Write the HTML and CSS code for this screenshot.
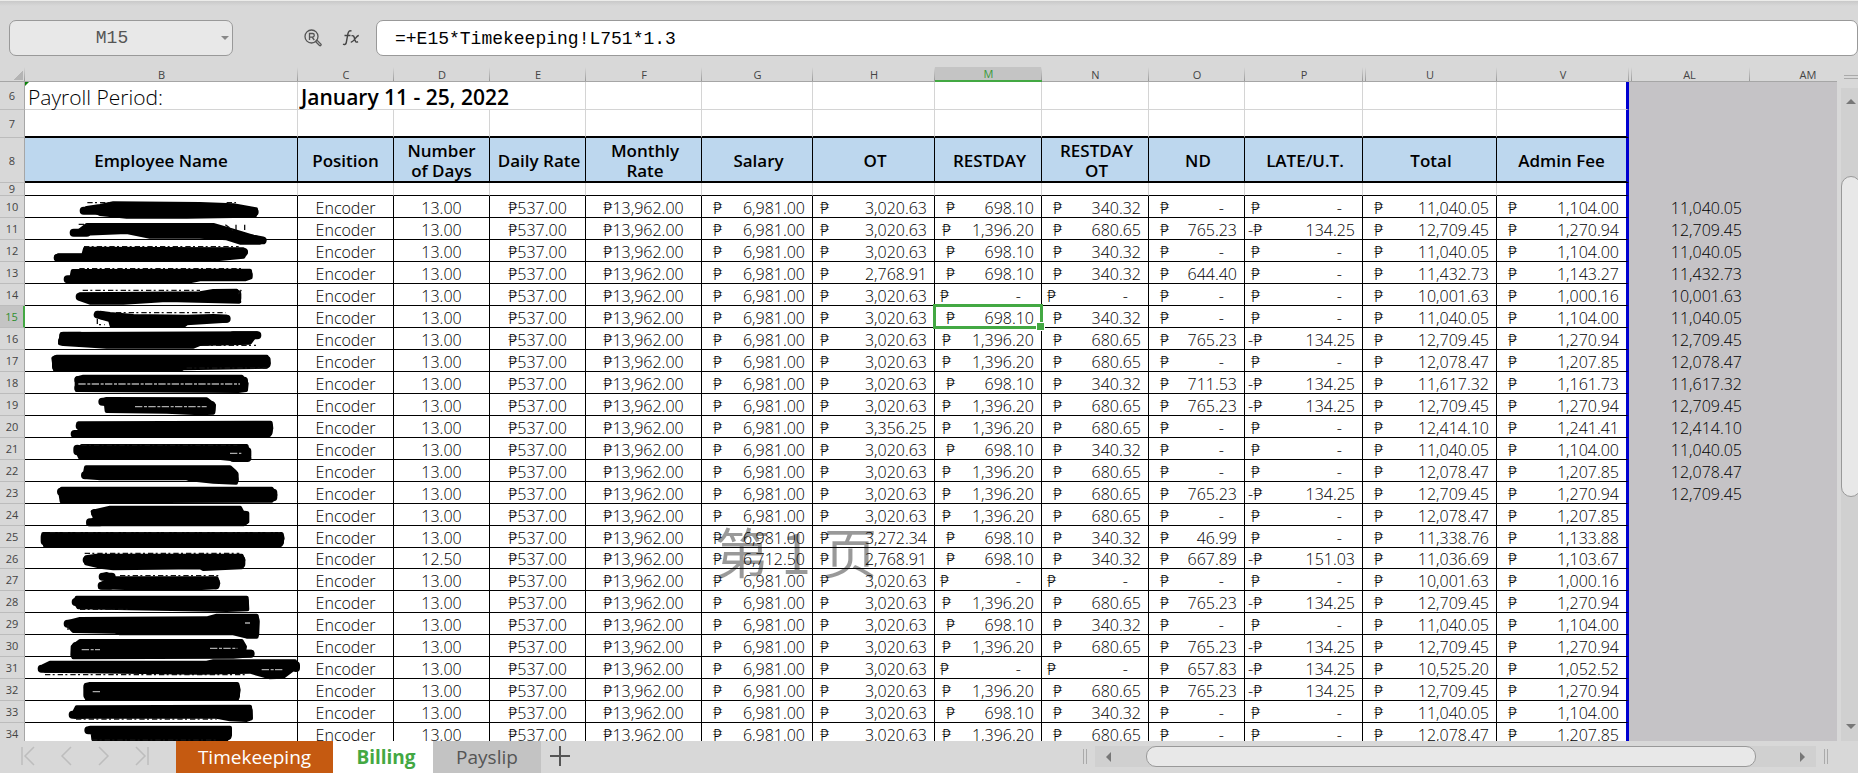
FILE: index.html
```html
<!DOCTYPE html>
<html lang="en">
<head>
    <meta charset="UTF-8">
    <meta name="viewport" content="width=device-width, initial-scale=1.0">
    <title>Billing</title>
    <link rel="stylesheet" href="styles.css">
</head>
<body>

    <div class="formula-bar">
        <div class="name-box">
            <input type="text" class="name-input" value="M15" aria-label="Name box">
            <span class="caret-down"></span>
        </div>
        <div class="formula-tools">
            <button class="tool" aria-label="Find reference">
                <svg width="18" height="18" viewBox="0 0 18 18" fill="none" stroke="#555" stroke-width="1.3">
                    <circle cx="7.5" cy="7.5" r="6.5"/>
                    <path d="M5.5 11V4.5h3a1.8 1.8 0 0 1 0 3.6h-3M8 8l2.3 3"/>
                    <path d="M11.5 12.5l1.4-1.4 4 4a1 1 0 0 1-1.4 1.4z"/>
                </svg>
            </button>
            <button class="tool" aria-label="Insert function">
                <svg width="18" height="18" viewBox="0 0 18 18" fill="none" stroke="#444" stroke-width="1.4">
                    <path d="M9.500 2.200C7.500 1 6.300 2.500 5.900 5L4.300 13.500C4 15.300 2.600 16 1 15.200M2.500 6.500h6M9.500 6.800c2.200-.8 2.700 1 3.200 3.200s1.300 4 3.300 2.700M16.800 6.500c-2.600 0-4.800 6.500-8 6.700"/>
                </svg>
            </button>
        </div>
        <input type="text" class="formula-input" value="=+E15*Timekeeping!L751*1.3" aria-label="Formula">
    </div>

    <div class="workspace">
        <div class="sheet">
            <table class="grid">
                <colgroup>
                    <col class="w-num"><col class="w-name"><col class="w-s"><col class="w-s"><col class="w-s">
                    <col class="w-f"><col class="w-g"><col class="w-h"><col class="w-m"><col class="w-m">
                    <col class="w-s"><col class="w-p"><col class="w-u"><col class="w-v"><col class="w-al"><col class="w-am">
                </colgroup>
                <thead>
                    <tr class="letters">
                        <th class="corner"></th>
                        <th>B</th><th>C</th><th>D</th><th>E</th><th>F</th><th>G</th><th>H</th>
                        <th class="active">M</th><th>N</th><th>O</th><th>P</th>
                        <th class="after-hidden">U</th><th>V</th><th class="after-hidden">AL</th><th>AM</th>
                    </tr>
                </thead>
                <tbody id="rows">
                    <tr class="plain tall">
                        <th class="num">6</th>
                        <td class="period flagged">Payroll Period:</td>
                        <td class="period bold" colspan="3">January 11 - 25, 2022</td>
                        <td></td><td></td><td></td><td></td><td></td><td></td><td></td><td></td><td class="edge"></td>
                        <td class="out"></td><td class="out"></td>
                    </tr>
                    <tr class="plain tall before-head">
                        <th class="num">7</th>
                        <td></td><td></td><td></td><td></td><td></td><td></td><td></td><td></td><td></td><td></td><td></td><td></td><td class="edge"></td>
                        <td class="out"></td><td class="out"></td>
                    </tr>
                    <tr class="head">
                        <th class="num">8</th>
                        <td>Employee Name</td><td>Position</td><td>Number<br>of Days</td>
                        <td class="shift">Daily Rate</td><td class="shift">Monthly<br>Rate</td><td class="shift">Salary</td>
                        <td class="shift">OT</td><td class="shift">RESTDAY</td><td class="shift">RESTDAY<br>OT</td>
                        <td class="shift">ND</td><td class="shift">LATE/U.T.</td><td class="shift">Total</td>
                        <td class="edge">Admin Fee</td>
                        <td class="out"></td><td class="out"></td>
                    </tr>
                    <tr class="plain short">
                        <th class="num">9</th>
                        <td></td><td></td><td></td><td></td><td></td><td></td><td></td><td></td><td></td><td></td><td></td><td></td><td class="edge"></td>
                        <td class="out"></td><td class="out"></td>
                    </tr>
                </tbody>
            </table>

            <!-- marker strokes over the name column -->
            <svg class="marker" width="420" height="570" viewBox="0 0 1260 1710">
                <g class="ink">
                    <path d="M260 54L300 48 340 40 600 42 700 46 768 58 765 76 700 78 560 80 380 80 300 72z"/>
                    <path d="M235 125L260 105 640 105 700 122 780 146 780 158 720 158 680 145 600 140 450 140 380 126 235 132z"/>
                    <path d="M175 196L250 195 255 176 730 178 738 186 730 200 650 208 175 210z"/>
                    <path d="M215 260L218 243 750 242 752 262 735 268 600 268 570 274 210 274z"/>
                    <path d="M240 313L600 310 640 303 710 302 718 335 500 330 370 338 270 338 240 327z"/>
                    <path d="M300 368L330 372 400 378 560 380 640 378 680 380 680 392 560 400 550 408 335 408 330 390 300 382z"/>
                    <path d="M180 460L185 432 770 430 750 458 600 462 580 470 320 470 190 462z"/>
                    <path d="M160 505L170 500 800 500 806 520 800 530 550 535 540 540 165 540z"/>
                    <path d="M230 565L250 560 725 560 740 580 738 600 715 603 230 600z"/>
                    <path d="M305 632L320 627 620 628 642 645 640 668 600 670 500 665 320 663 318 645z"/>
                    <path d="M225 736L240 720 235 700 812 698 814 715 808 735 780 738z"/>
                    <path d="M230 780L245 768 740 768 745 795 748 805 700 808 640 802 240 802z"/>
                    <path d="M253 860L258 832 690 832 705 845 710 870 708 878 640 875 570 868 560 865 300 865z"/>
                </g>
                <g class="ends">
                    <path d="M251 62L300 62M764 66H700M221 128H260M788 151L740 143M173 203H260M732 186H700M203 268H260M746 254H700M239 320H290M712 325V312M293 374L340 382M680 386H640M190 437H240M772 436H700M186 454H240M168 508V530M800 510V522M235 570H260M235 594H260M732 572V594M307 635H340M634 645V660M239 708H300M224 732H270M806 708V726M232 776V784M742 784V798M742 804H700M255 856H290M704 854V868"/>
                </g>
                <g class="ink" transform="translate(0 840)">
                    <path d="M180 62L185 56 815 56 826 75 815 92 185 94z"/>
                    <path d="M267 160L285 145 278 125 330 113 720 113 728 128 742 130 742 155 730 163 265 163z"/>
                    <path d="M130 192L845 192 848 205 842 225 135 227z"/>
                    <path d="M258 262L290 257 725 257 730 270 725 292 610 297 600 292 340 295 300 290 258 280z"/>
                    <path d="M305 316L320 312 345 325 650 325 655 340 650 352 590 355 400 355 300 352 304 342 325 330z"/>
                    <path d="M225 395L230 383 740 383 742 418 680 420 390 415 235 412z"/>
                    <path d="M205 456L240 447 620 445 650 437 770 437 773 455 770 500 740 500 700 490 360 490 345 485 220 483 205 466z"/>
                    <path d="M217 555L218 530 240 513 725 513 735 530 732 545 755 545 755 556 700 560 220 562z"/>
                    <path d="M130 588L150 578 620 578 640 574 885 574 890 590 850 620 810 622 750 605 600 608 135 602z"/>
                    <path d="M257 645L270 642 712 642 716 660 712 685 260 685z"/>
                    <path d="M222 728L230 712 750 710 753 745 740 750 690 748 650 740 225 740z"/>
                    <path d="M264 780L270 773 690 773 690 795 680 808 280 808 278 790z"/>
                </g>
                <g class="ends" transform="translate(0 840)">
                    <path d="M183 65H230M820 68V82M285 129H330M270 157H300M734 134V152M134 200V214M840 202V216M260 270H300M724 270V282M308 320H335M305 347H330M647 336V346M227 396H260M734 394V410M203 461H240M766 450V490M228 528V548M752 551H700M125 596H170M888 586V594M262 652V676M708 654V676M218 734H250M746 722V738M265 781H300M683 784V798"/>
                </g>
                <g class="specks">
                    <path d="M262 38H340M680 38H708M236 103H262M676 104L700 122M708 104V122M734 104V122M252 170H716M238 236H732M248 301H600M715 312L724 300M348 368H676M292 386V404H314M610 466H768M560 534H800M244 766H712"/>
                    <path d="M150 1028H840M254 1090H718M360 1157H655M204 1304V1325M240 1258H384M135 1454H740M228 1587H650M276 1650H656"/>
                </g>
                <g class="gaps">
                    <path d="M235 582H720M405 650H620M690 790H724M245 1379H300M630 1375H712M785 1439H852M278 1505H300M735 1299H750"/>
                </g>
            </svg>
            <div class="watermark">第 1 页</div>
        </div>

        <div class="vscroll">
            <span class="split-h"></span>
            <div class="vtrack">
                <span class="arrow up"></span>
                <span class="vthumb"></span>
                <span class="arrow down"></span>
            </div>
        </div>
    </div>

    <div class="tab-bar">
        <div class="tab-nav">
            <button aria-label="First sheet"><svg width="16" height="20" viewBox="0 0 16 20"><path d="M2 1v18M14 1L5 10l9 9"/></svg></button>
            <button aria-label="Previous sheet"><svg width="16" height="20" viewBox="0 0 16 20"><path d="M13 1L4 10l9 9"/></svg></button>
            <button aria-label="Next sheet"><svg width="16" height="20" viewBox="0 0 16 20"><path d="M3 1l9 9-9 9"/></svg></button>
            <button aria-label="Last sheet"><svg width="16" height="20" viewBox="0 0 16 20"><path d="M14 1v18M2 1l9 9-9 9"/></svg></button>
        </div>
        <button class="tab tab-orange">Timekeeping</button>
        <button class="tab tab-active">Billing</button>
        <button class="tab tab-grey">Payslip</button>
        <button class="add" aria-label="Add sheet"><svg width="20" height="20" viewBox="0 0 20 20"><path d="M10 0v20M0 10h20"/></svg></button>
        <div class="hscroll">
            <span class="split-v"></span>
            <div class="htrack">
                <span class="arrow left"></span>
                <span class="hthumb"></span>
                <span class="arrow right"></span>
            </div>
            <span class="split-v"></span>
        </div>
    </div>

    <script>
        // days, salary, OT, restday, restday OT, ND, late/U.T., total, admin fee
        const data = [
            ["13.00", "6,981.00", "3,020.63", "698.10", "340.32", "-", "-", "11,040.05", "1,104.00"],
            ["13.00", "6,981.00", "3,020.63", "1,396.20", "680.65", "765.23", "134.25", "12,709.45", "1,270.94"],
            ["13.00", "6,981.00", "3,020.63", "698.10", "340.32", "-", "-", "11,040.05", "1,104.00"],
            ["13.00", "6,981.00", "2,768.91", "698.10", "340.32", "644.40", "-", "11,432.73", "1,143.27"],
            ["13.00", "6,981.00", "3,020.63", "-", "-", "-", "-", "10,001.63", "1,000.16"],
            ["13.00", "6,981.00", "3,020.63", "698.10", "340.32", "-", "-", "11,040.05", "1,104.00"],
            ["13.00", "6,981.00", "3,020.63", "1,396.20", "680.65", "765.23", "134.25", "12,709.45", "1,270.94"],
            ["13.00", "6,981.00", "3,020.63", "1,396.20", "680.65", "-", "-", "12,078.47", "1,207.85"],
            ["13.00", "6,981.00", "3,020.63", "698.10", "340.32", "711.53", "134.25", "11,617.32", "1,161.73"],
            ["13.00", "6,981.00", "3,020.63", "1,396.20", "680.65", "765.23", "134.25", "12,709.45", "1,270.94"],
            ["13.00", "6,981.00", "3,356.25", "1,396.20", "680.65", "-", "-", "12,414.10", "1,241.41"],
            ["13.00", "6,981.00", "3,020.63", "698.10", "340.32", "-", "-", "11,040.05", "1,104.00"],
            ["13.00", "6,981.00", "3,020.63", "1,396.20", "680.65", "-", "-", "12,078.47", "1,207.85"],
            ["13.00", "6,981.00", "3,020.63", "1,396.20", "680.65", "765.23", "134.25", "12,709.45", "1,270.94"],
            ["13.00", "6,981.00", "3,020.63", "1,396.20", "680.65", "-", "-", "12,078.47", "1,207.85"],
            ["13.00", "6,981.00", "3,272.34", "698.10", "340.32", "46.99", "-", "11,338.76", "1,133.88"],
            ["12.50", "6,712.50", "2,768.91", "698.10", "340.32", "667.89", "151.03", "11,036.69", "1,103.67"],
            ["13.00", "6,981.00", "3,020.63", "-", "-", "-", "-", "10,001.63", "1,000.16"],
            ["13.00", "6,981.00", "3,020.63", "1,396.20", "680.65", "765.23", "134.25", "12,709.45", "1,270.94"],
            ["13.00", "6,981.00", "3,020.63", "698.10", "340.32", "-", "-", "11,040.05", "1,104.00"],
            ["13.00", "6,981.00", "3,020.63", "1,396.20", "680.65", "765.23", "134.25", "12,709.45", "1,270.94"],
            ["13.00", "6,981.00", "3,020.63", "-", "-", "657.83", "134.25", "10,525.20", "1,052.52"],
            ["13.00", "6,981.00", "3,020.63", "1,396.20", "680.65", "765.23", "134.25", "12,709.45", "1,270.94"],
            ["13.00", "6,981.00", "3,020.63", "698.10", "340.32", "-", "-", "11,040.05", "1,104.00"],
            ["13.00", "6,981.00", "3,020.63", "1,396.20", "680.65", "-", "-", "12,078.47", "1,207.85"]
        ];
        const names = ["g", "h", "m", "n", "o", "p", "u", "v"];
        const body = document.getElementById("rows");

        function moneyCell(value, name, rowNo) {
            let cls = "money col-" + name;
            if (value === "-") cls += " zero";
            if (value.length > 7) cls += " long";
            if (name === "p" && value !== "-") cls += " negative";
            if (name === "v") cls += " edge";
            if (name === "m" && rowNo === 15) cls += " selected";
            const sign = name === "p" && value !== "-" ? "-₱" : "₱";
            return `<td class="${cls}"><div><span>${sign}</span><span>${value}</span></div></td>`;
        }

        data.forEach((item, index) => {
            const rowNo = index + 10;
            const row = document.createElement("tr");
            row.className = "data" + (rowNo === 26 ? " lower" : "");
            let html = `<th class="num${rowNo === 15 ? " active" : ""}">${rowNo}</th>
                <td></td><td>Encoder</td><td>${item[0]}</td><td>₱537.00</td><td>₱13,962.00</td>`;
            names.forEach((name, i) => {
                html += moneyCell(item[i + 1], name, rowNo);
            });
            html += `<td class="out sum">${rowNo < 24 ? item[7] : ""}</td><td class="out"></td>`;
            row.innerHTML = html;
            body.appendChild(row);
        });
    </script>
</body>
</html>
```

FILE: styles.css
```css
* {
    box-sizing: border-box;
}

body {
    margin: 0;
    height: 100vh;
    display: flex;
    flex-direction: column;
    overflow: hidden;
    background: #d8d8d8;
    font-family: "Open Sans", "Noto Sans", "Noto Sans CJK SC", sans-serif;
    color: #000;
}

button {
    border: 0;
    padding: 0;
    background: none;
    font-family: inherit;
}

/* formula bar */
.formula-bar {
    flex: none;
    display: flex;
    align-items: center;
    height: 67px;
    padding: 7px 0 0 9px;
    border-top: 1px solid #ececea;
    background: linear-gradient(#c9c9c9, #d8d8d8 5px);
}

.name-box {
    position: relative;
    width: 224px;
    height: 36px;
}

.name-input,
.formula-input {
    height: 36px;
    border: 1px solid #999;
    border-radius: 7px;
    font-family: "Liberation Mono", monospace;
    font-size: 18px;
}

.name-input {
    width: 100%;
    padding: 0 18px 0 0;
    background: #e8e8e8;
    color: #555;
    text-align: center;
}

.caret-down {
    position: absolute;
    right: 4px;
    top: 16px;
    border: 4px solid transparent;
    border-top-color: #888;
    border-bottom: 0;
}

.formula-tools {
    display: flex;
    width: 143px;
    padding-left: 71px;
    gap: 20px;
}

.tool {
    width: 18px;
    height: 18px;
}

.tool svg {
    display: block;
}

.formula-input {
    flex: 1;
    padding: 2px 18px 0;
    background: #fff;
    color: #000;
}

/* sheet */
.workspace {
    flex: 1;
    min-height: 0;
    display: flex;
}

.sheet {
    position: relative;
    flex: 1;
    min-width: 0;
    overflow: hidden;
    background: #c5c3c6;
}

.grid {
    table-layout: fixed;
    width: 1866px;
    border-spacing: 0;
    font-size: 16px;
    font-weight: 300;
    line-height: 17px;
}

.w-num { width: 25px; }
.w-name { width: 273px; }
.w-s { width: 96px; }
.w-f { width: 116px; }
.w-g { width: 111px; }
.w-h { width: 122px; }
.w-m { width: 107px; }
.w-p { width: 118px; }
.w-u { width: 134px; }
.w-v { width: 132px; }
.w-al { width: 121px; }
.w-am { width: 116px; }

.grid th,
.grid td {
    padding: 0;
    white-space: nowrap;
}

.grid .letters th {
    height: 15px;
    padding-top: 1px;
    border-bottom: 1px solid #a6a6a6;
    background: linear-gradient(#d8d8d8, #999) right / 1px 100% no-repeat #d8d8d8;
    color: #444;
    font-size: 11px;
    font-weight: 400;
    line-height: 13px;
}

.grid .letters .active {
    border-bottom: 2px solid #43a843;
    background-color: #c4c4c4;
    color: #3a9a3a;
    line-height: 12px;
}

.grid .letters .after-hidden {
    background:
        linear-gradient(#d8d8d8, #999) right / 1px 100% no-repeat,
        linear-gradient(#d8d8d8, #999) 2px 0 / 1px 100% no-repeat #d8d8d8;
}

.grid .letters .corner {
    background:
        linear-gradient(135deg, transparent 50%, #b4b4b4 50%) 13px 3px / 10px 10px no-repeat,
        linear-gradient(#d8d8d8, #999) right / 1px 100% no-repeat #d8d8d8;
}

.num {
    border-right: 1px solid #a6a6a6;
    border-bottom: 1px solid #bcbcbc;
    background: #d8d8d8;
    color: #444;
    font-size: 11px;
    font-weight: 400;
}

.num.active {
    border-right: 2px solid #43a843;
    background: #c4c4c4;
    color: #2f8f2f;
}

.grid td {
    border-right: 1px solid #000;
    border-bottom: 1px solid #000;
    background: #fff;
    text-align: center;
}

.grid .plain td {
    border-color: #d4d4d4;
}

.tall {
    height: 28px;
}

.short {
    height: 13px;
    line-height: 10px;
}

.grid .short td {
    border-bottom-color: #000;
}

.grid .before-head td {
    border-bottom: 2px solid #000;
}

.grid .period {
    padding: 4px 0 0 3px;
    font-size: 21px;
    line-height: 23px;
    text-align: left;
}

.grid .bold {
    font-weight: 600;
}

.flagged {
    position: relative;
}

.flagged::before {
    content: "";
    position: absolute;
    left: 0;
    top: 0;
    border-top: 4px solid #0a800a;
    border-right: 4px solid transparent;
}

.head {
    height: 45px;
}

.grid .head td {
    padding-top: 2px;
    border-bottom-width: 2px;
    background: #bdd7ee;
    font-size: 17px;
    font-weight: 600;
    line-height: 20px;
}

.grid .head .shift {
    padding-left: 3px;
}

.data {
    height: 22px;
}

.data.lower {
    height: 21px;
}

.grid .data td {
    padding-top: 4px;
}

.grid .lower td {
    padding-top: 3px;
}

.money div {
    display: flex;
    justify-content: space-between;
    padding: 0 7px 0 11px;
}

.col-h div,
.col-m.long div {
    padding-left: 7px;
}

.col-p div {
    padding-left: 6px;
}

.col-p.negative div {
    padding-left: 3px;
}

.col-m.zero div,
.col-n.zero div {
    padding-left: 5px;
}

.money.zero div {
    padding-right: 20px;
}

.grid td.edge {
    border-right: 3px solid #0000d0;
}

.grid tr td.out {
    border: 0;
    border-bottom: 1px solid #c5c3c6;
    background: #c5c3c6;
}

.grid .sum {
    padding-right: 8px;
    text-align: right;
}

.selected {
    position: relative;
}

.selected::before {
    content: "";
    position: absolute;
    inset: -2px;
    border: 3px solid #43a843;
}

.selected::after {
    content: "";
    position: absolute;
    right: -4px;
    bottom: -4px;
    width: 7px;
    height: 7px;
    border: 1px solid #fff;
    background: #43a843;
}

.marker {
    position: absolute;
    left: 0;
    top: 123px;
}

.ink {
    fill: #000;
    stroke: #000;
    stroke-width: 12;
    stroke-linejoin: round;
}

.ends {
    fill: none;
    stroke: #000;
    stroke-width: 24;
    stroke-linecap: round;
}

.specks {
    fill: none;
    stroke: #111;
    stroke-width: 4;
    stroke-dasharray: 16 7 6 9;
}

.gaps {
    fill: none;
    stroke: #aaa;
    stroke-width: 4;
    stroke-dasharray: 22 5 9 4;
}

.watermark {
    position: absolute;
    left: 715px;
    top: 454px;
    color: rgba(0, 0, 0, 0.4);
    font-family: "Noto Sans CJK SC", sans-serif;
    font-size: 54px;
    line-height: 60px;
}

/* scroll bars */
.vscroll {
    flex: none;
    display: flex;
    flex-direction: column;
    width: 21px;
    padding: 8px 0 0 4px;
    overflow: hidden;
}

.split-h {
    flex: none;
    height: 4px;
    margin: 0 0 9px 3px;
    border-top: 1px solid #aaa;
    border-bottom: 1px solid #aaa;
}

.vtrack {
    flex: 1;
    display: flex;
    flex-direction: column;
    align-items: center;
    width: 20px;
    padding: 11px 0 12px;
    background: #d0d0d0;
}

.arrow {
    flex: none;
    border: 5px solid transparent;
}

.up {
    border-top: 0;
    border-bottom-color: #777;
    margin-bottom: 72px;
}

.down {
    border-bottom: 0;
    border-top-color: #777;
    margin-top: auto;
}

.vthumb {
    width: 20px;
    height: 51%;
    border: 1px solid #999;
    border-radius: 10px;
    background: #e8e8e8;
}

/* sheet tabs */
.tab-bar {
    flex: none;
    display: flex;
    height: 32px;
}

.tab-nav {
    display: flex;
    align-items: center;
    gap: 22px;
    width: 176px;
    padding: 0 0 2px 20px;
}

.tab-nav button {
    width: 16px;
    height: 20px;
}

.tab-nav svg,
.add svg {
    display: block;
    fill: none;
    stroke: #bdbdbd;
    stroke-width: 1.5;
}

.tab {
    font-size: 19px;
    line-height: 32px;
}

.tab-orange {
    width: 157px;
    background: #c55a11;
    color: #fff;
}

.tab-active {
    width: 100px;
    padding-left: 6px;
    background: #fff;
    color: #43a843;
    font-weight: 700;
}

.tab-grey {
    width: 108px;
    background: #c3c3c3;
    color: #555;
}

.add {
    width: 38px;
    padding: 0 9px 2px;
}

.tab-bar .add svg {
    stroke: #555;
    stroke-width: 2;
}

.hscroll {
    display: flex;
    align-items: center;
    width: 775px;
    margin-left: auto;
    padding: 0 30px 1px 0;
    gap: 8px;
}

.split-v {
    flex: none;
    width: 4px;
    height: 15px;
    border-left: 1px solid #aaa;
    border-right: 1px solid #aaa;
}

.htrack {
    flex: 1;
    display: flex;
    align-items: center;
    height: 21px;
    padding: 0 11px;
    background: #d0d0d0;
}

.left {
    border-left: 0;
    border-right-color: #777;
    margin-right: 35px;
}

.right {
    border-right: 0;
    border-left-color: #777;
    margin-left: 44px;
}

.hthumb {
    flex: 1;
    height: 21px;
    border: 1px solid #999;
    border-radius: 10px;
    background: #e8e8e8;
}
```
